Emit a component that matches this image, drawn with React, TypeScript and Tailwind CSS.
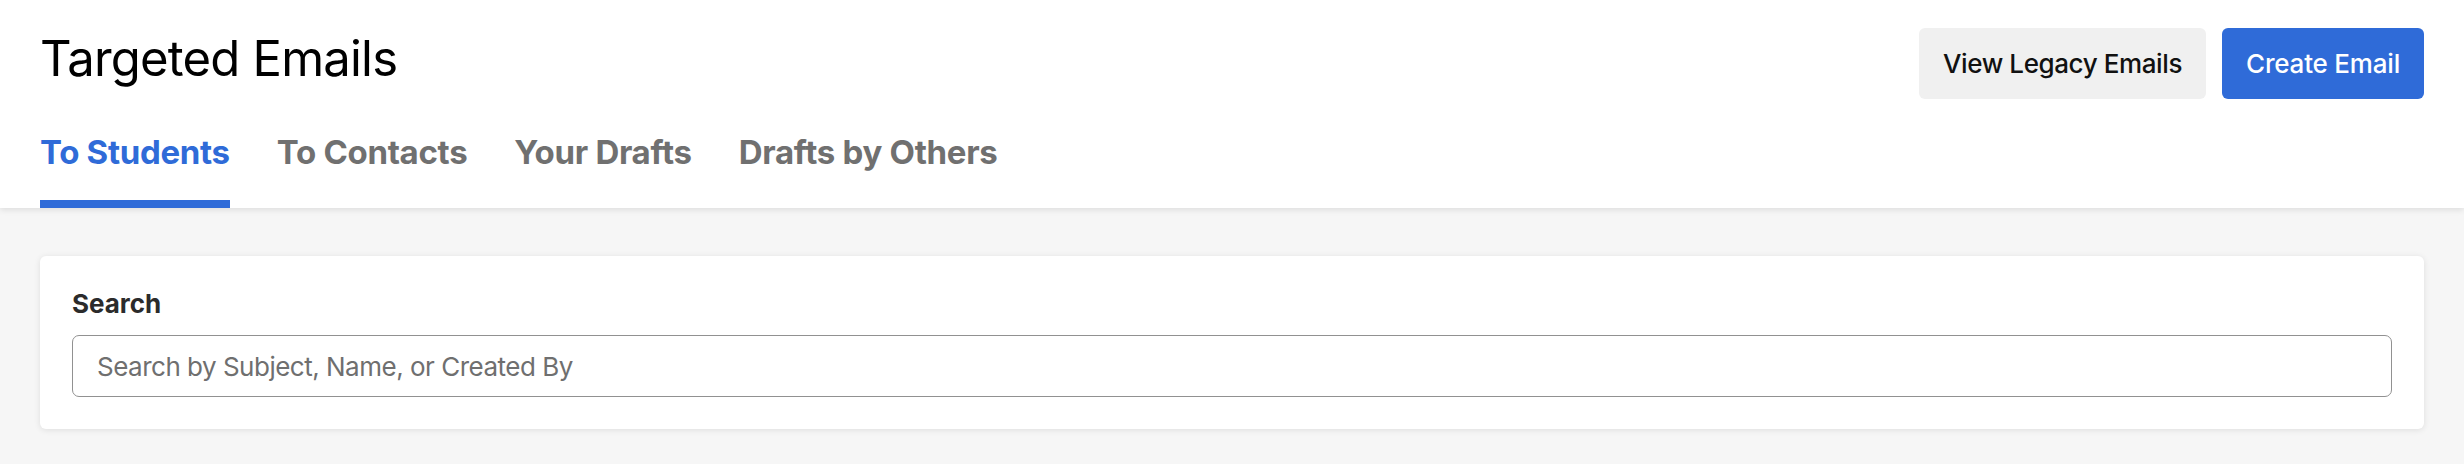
import { useState } from "react"

const tabs = ["To Students", "To Contacts", "Your Drafts", "Drafts by Others"]

export default function App() {
  const [active, setActive] = useState(0)
  const [query, setQuery] = useState("")

  return (
    <main
      className="min-h-screen bg-[#f6f6f6]"
      style={{ fontFamily: "Inter, 'Noto Sans', 'Liberation Sans', sans-serif" }}
    >
      {/* Page header */}
      <header className="relative z-10 bg-white px-[40px] pt-[28px] shadow-[0_2px_6px_rgba(0,0,0,0.10)]">
        <div className="flex items-start justify-between">
          <h1 className="mt-[6px] text-[49px] leading-[49px] font-normal text-black tracking-[-0.8px]">
            Targeted Emails
          </h1>
          <div className="flex gap-[16px]">
            <button className="h-[71px] rounded-[6px] bg-[#f0f0f0] px-[24px] text-[26px] font-medium tracking-[-0.4px] text-[#111]">
              View Legacy Emails
            </button>
            <button className="h-[71px] rounded-[6px] bg-[#2f6bd8] px-[24px] text-[26px] font-medium tracking-[-0.2px] text-white">
              Create Email
            </button>
          </div>
        </div>

        {/* Tabs */}
        <nav className="mt-[37px] flex gap-[47px]">
          {tabs.map((tab, i) => (
            <button
              key={tab}
              onClick={() => setActive(i)}
              className={
                i === active
                  ? "border-b-[8px] border-[#2f6bd8] pb-[31px] text-[33px] leading-[33px] font-bold tracking-[-0.3px] text-[#2f6bd8]"
                  : "border-b-[8px] border-transparent pb-[31px] text-[33px] leading-[33px] font-bold tracking-[-0.3px] text-[#707070]"
              }
            >
              {tab}
            </button>
          ))}
        </nav>
      </header>

      {/* Search card */}
      <div className="px-[40px] pt-[48px]">
        <section className="rounded-[6px] bg-white px-[32px] pt-[35px] pb-[32px] shadow-[0_1px_6px_rgba(0,0,0,0.10)]">
          <label htmlFor="search" className="mb-[18px] block text-[26px] leading-[26px] font-bold text-[#2b2b2b]">
            Search
          </label>
          <input
            id="search"
            value={query}
            onChange={(e) => setQuery(e.target.value)}
            placeholder="Search by Subject, Name, or Created By"
            className="block h-[62px] w-full rounded-[7px] border-[1.5px] border-[#919191] bg-white px-[24px] text-[26px] tracking-[-0.5px] text-[#222] placeholder:text-[#6f6f6f] outline-none"
          />
        </section>
      </div>
    </main>
  )
}
